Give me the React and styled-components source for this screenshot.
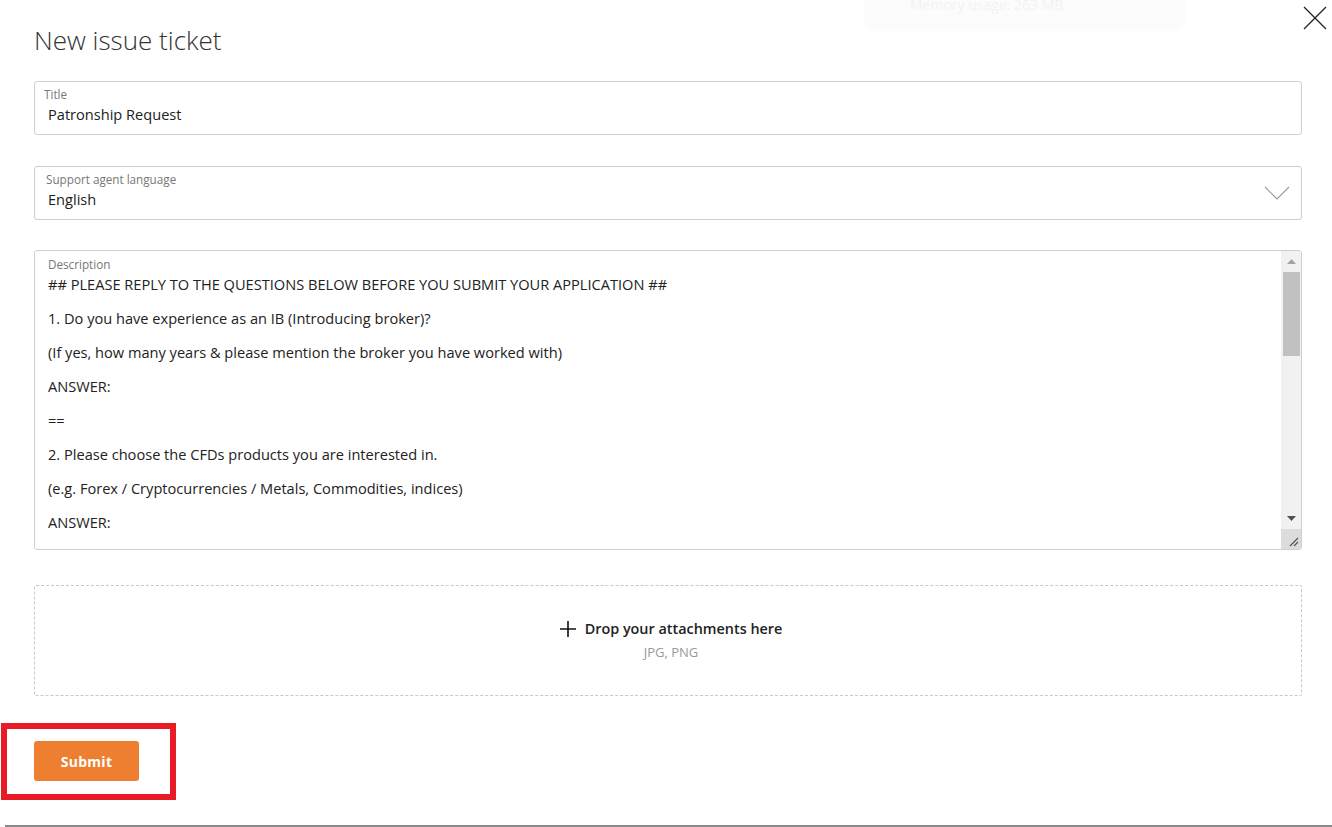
import React from "react";
import styled, { createGlobalStyle } from "styled-components";

const Global = createGlobalStyle`
  html, body { margin: 0; padding: 0; background: #fff; }
  body { font-family: "Open Sans", "Noto Sans", sans-serif; color: #333; }
  * { box-sizing: border-box; }
`;

const Page = styled.div`
  position: relative;
  width: 1332px;
  height: 827px;
  overflow: hidden;
  background: #fff;
`;

const Ghost = styled.div`
  position: absolute;
  left: 864px;
  top: -22px;
  width: 321px;
  height: 53px;
  border-radius: 10px;
  background: #fcfcfc;
  color: #f3f3f3;
  font-size: 14px;
  display: flex;
  align-items: center;
  padding: 0 0 0 46px;
`;

const Close = styled.button`
  position: absolute;
  right: 5px;
  top: 6px;
  width: 24px;
  height: 24px;
  border: 0;
  padding: 0;
  background: transparent;
  cursor: pointer;
`;

const Form = styled.div`
  display: flex;
  flex-direction: column;
  padding: 24px 30px 0 34px;
`;

const Heading = styled.h1`
  margin: 0 0 0 0;
  font-size: 26px;
  font-weight: 300;
  color: #333;
  line-height: 32px;
`;

const Field = styled.div`
  position: relative;
  margin-top: ${(p) => p.$mt}px;
  height: ${(p) => p.$h}px;
  border: 1px solid #cfcfcf;
  border-radius: 3px;
  display: flex;
`;

const FieldBody = styled.div`
  flex: 1;
  display: flex;
  flex-direction: column;
  padding: ${(p) => p.$pt}px 0 0 ${(p) => p.$pl}px;
  min-width: 0;
`;

const Label = styled.div`
  font-size: 11.7px;
  line-height: 13px;
  color: #777;
`;

const Value = styled.div`
  font-size: 14.6px;
  line-height: 20px;
  color: #222;
  margin-top: 3px;
  margin-left: ${(p) => p.$ml || 0}px;
`;

const Chevron = styled.svg`
  position: absolute;
  right: 11px;
  top: 19px;
`;

const DescText = styled.div`
  font-size: 14.6px;
  color: #222;
  margin-top: -4px;
  overflow: hidden;
  p { margin: 0; line-height: 34px; height: 34px; white-space: nowrap; }
`;

const Scrollbar = styled.div`
  width: 20px;
  background: #f1f1f1;
  display: flex;
  flex-direction: column;
  align-items: center;
`;

const Arrow = styled.div`
  height: 21px;
  width: 100%;
  display: flex;
  align-items: center;
  justify-content: center;
`;

const Thumb = styled.div`
  width: 17px;
  height: 84px;
  background: #c1c1c1;
`;

const Track = styled.div`
  flex: 1;
`;

const Corner = styled.div`
  height: 20px;
  width: 100%;
  background: #dcdcdc;
  display: flex;
  align-items: flex-end;
  justify-content: flex-end;
  padding: 0 2px 2px 0;
`;

const Drop = styled.div`
  margin-top: 35px;
  height: 111px;
  border: 1px dashed #c8c8c8;
  border-radius: 2px;
  display: flex;
  flex-direction: column;
  align-items: center;
  justify-content: center;
  padding-bottom: 2px;
`;

const DropTitle = styled.div`
  display: flex;
  align-items: center;
  gap: 9px;
  font-size: 14.4px;
  font-weight: 600;
  color: #222;
  line-height: 20px;
  margin-left: 6px;
`;

const DropSub = styled.div`
  font-size: 13px;
  color: #9a9a9a;
  margin-top: 4px;
  line-height: 18px;
  font-weight: 400;
  margin-left: 6px;
`;

const SubmitRow = styled.div`
  margin-top: 45px;
`;

const SubmitButton = styled.button`
  width: 105px;
  height: 40px;
  border: 0;
  border-radius: 3px;
  background: #ee7f31;
  color: #fff;
  font-family: inherit;
  font-size: 14px;
  font-weight: 700;
  letter-spacing: 0.3px;
  cursor: pointer;
`;

const Highlight = styled.div`
  position: absolute;
  left: 1px;
  top: 723px;
  width: 175px;
  height: 77px;
  border: 6px solid #e81c24;
  pointer-events: none;
`;

const BottomRule = styled.div`
  position: absolute;
  left: 5px;
  right: 0;
  top: 825px;
  height: 2px;
  background: #8a8a8a;
`;

const lines = [
  "## PLEASE REPLY TO THE QUESTIONS BELOW BEFORE YOU SUBMIT YOUR APPLICATION ##",
  "1. Do you have experience as an IB (Introducing broker)?",
  "(If yes, how many years & please mention the broker you have worked with)",
  "ANSWER:",
  "==",
  "2. Please choose the CFDs products you are interested in.",
  "(e.g. Forex / Cryptocurrencies / Metals, Commodities, indices)",
  "ANSWER:",
];

export default function App() {
  return (
    <Page>
      <Global />
      <Ghost>Memory usage: 263 MB</Ghost>
      <Close aria-label="Close">
        <svg width="24" height="24" viewBox="0 0 24 24">
          <path d="M1 1 L23 23 M23 1 L1 23" stroke="#222" strokeWidth="1.3" fill="none" />
        </svg>
      </Close>
      <Form>
        <Heading>New issue ticket</Heading>
        <Field $mt={25} $h={54}>
          <FieldBody $pt={6} $pl={9}>
            <Label>Title</Label>
            <Value $ml={4}>Patronship Request</Value>
          </FieldBody>
        </Field>
        <Field $mt={31} $h={54}>
          <FieldBody $pt={6} $pl={11}>
            <Label>Support agent language</Label>
            <Value $ml={2}>English</Value>
          </FieldBody>
          <Chevron width="26" height="15" viewBox="0 0 26 15">
            <path d="M1 1 L13 13 L25 1" stroke="#999" strokeWidth="1.1" fill="none" />
          </Chevron>
        </Field>
        <Field $mt={30} $h={300}>
          <FieldBody $pt={7} $pl={13}>
            <Label>Description</Label>
            <DescText>
              {lines.map((l, i) => (
                <p key={i}>{l}</p>
              ))}
            </DescText>
          </FieldBody>
          <Scrollbar>
            <Arrow>
              <svg width="9" height="5" viewBox="0 0 9 5"><path d="M0 5 L4.5 0 L9 5 Z" fill="#a3a3a3" /></svg>
            </Arrow>
            <Thumb />
            <Track />
            <Arrow>
              <svg width="9" height="5" viewBox="0 0 9 5"><path d="M0 0 L4.5 5 L9 0 Z" fill="#505050" /></svg>
            </Arrow>
            <Corner>
              <svg width="10" height="10" viewBox="0 0 10 10">
                <path d="M1 9 L9 1 M5 9 L9 5" stroke="#555" strokeWidth="1.2" fill="none" />
              </svg>
            </Corner>
          </Scrollbar>
        </Field>
        <Drop>
          <DropTitle>
            <svg width="16" height="16" viewBox="0 0 16 16">
              <path d="M8 0 V16 M0 8 H16" stroke="#111" strokeWidth="1.6" fill="none" />
            </svg>
            Drop your attachments here
          </DropTitle>
          <DropSub>JPG, PNG</DropSub>
        </Drop>
        <SubmitRow>
          <SubmitButton>Submit</SubmitButton>
        </SubmitRow>
      </Form>
      <Highlight />
      <BottomRule />
    </Page>
  );
}
